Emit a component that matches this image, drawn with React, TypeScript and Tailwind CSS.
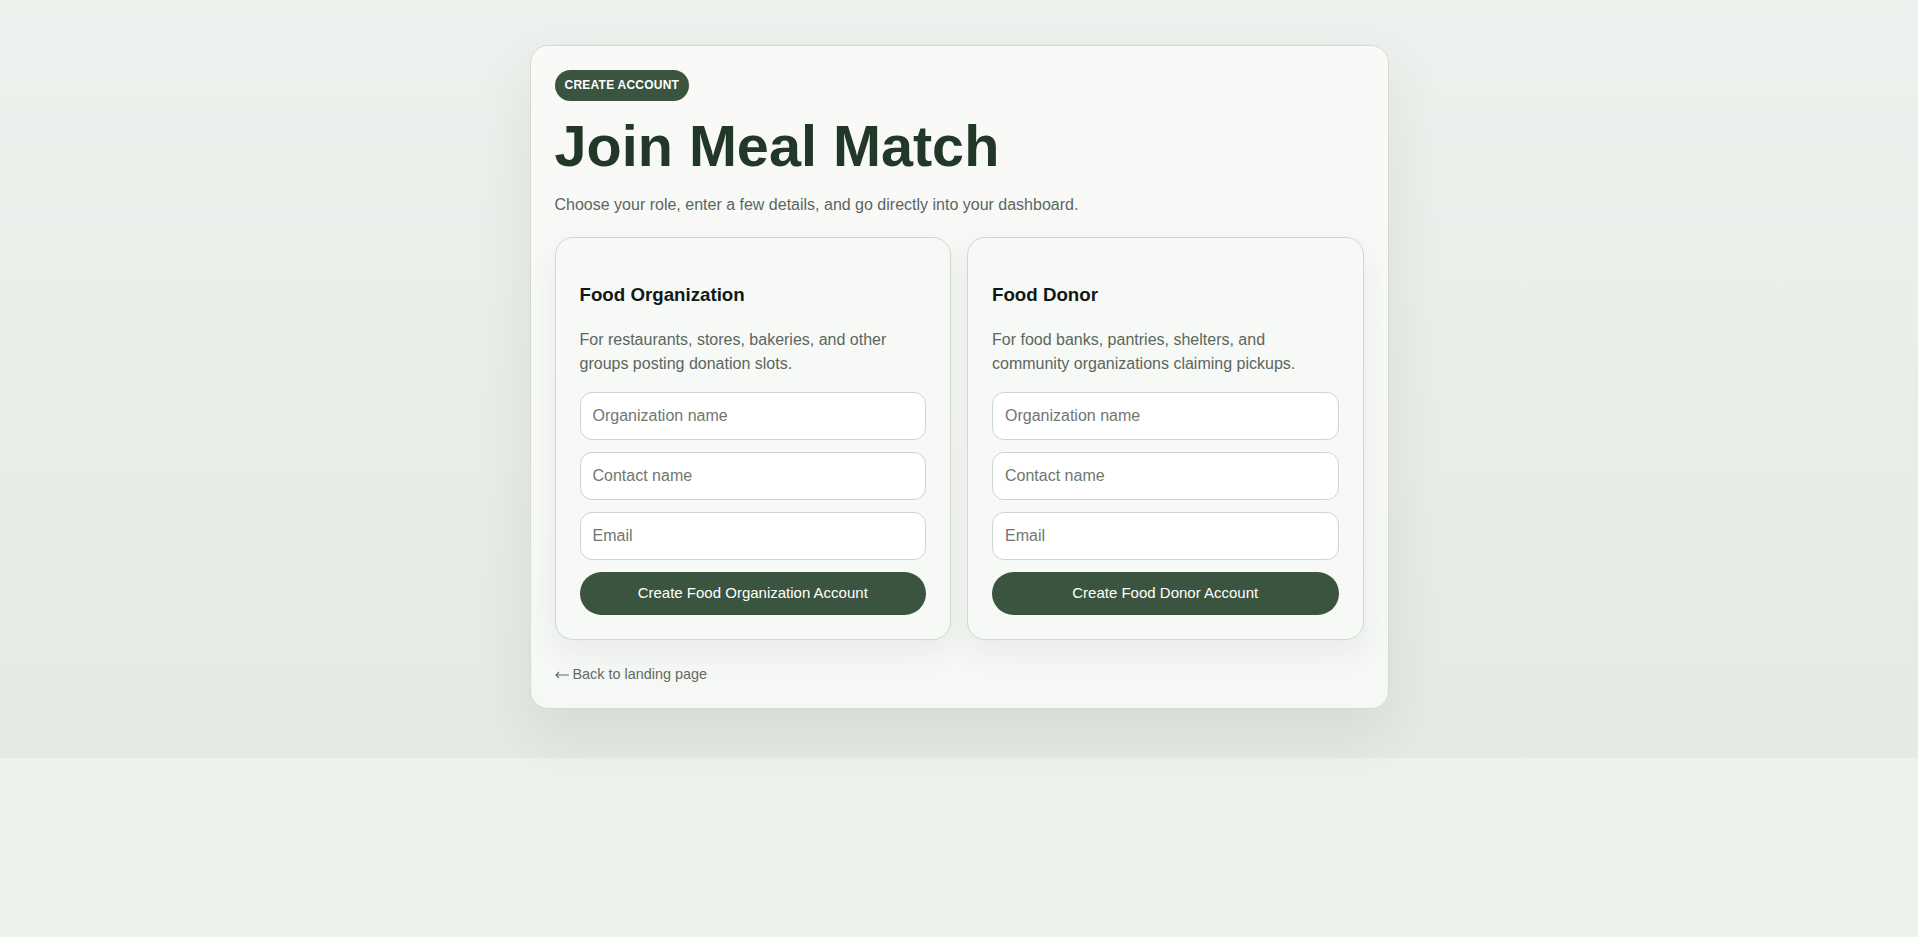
import React from "react";

function RoleCard({ title, desc, cta }: { title: string; desc: string; cta: string }) {
  return (
    <div className="rounded-[18px] border border-[#cfd7d0] bg-[#f7f9f6] px-6 pb-6 pt-[43px] shadow-[0_12px_30px_rgba(40,60,45,0.07)]">
      <h3 className="text-[18.72px] font-bold leading-[28px] text-[#111813]">{title}</h3>
      <p className="mt-[19px] text-[16px] leading-6 text-[#5b6660]">{desc}</p>
      <div className="mt-4 flex flex-col gap-3">
        <input
          className="h-12 w-full rounded-[12px] border border-[#cdd5ce] bg-white px-3 text-[16px] text-[#222] placeholder:text-[#70776f] outline-none"
          placeholder="Organization name"
        />
        <input
          className="h-12 w-full rounded-[12px] border border-[#cdd5ce] bg-white px-3 text-[16px] text-[#222] placeholder:text-[#70776f] outline-none"
          placeholder="Contact name"
        />
        <input
          className="h-12 w-full rounded-[12px] border border-[#cdd5ce] bg-white px-3 text-[16px] text-[#222] placeholder:text-[#70776f] outline-none"
          placeholder="Email"
        />
        <button className="h-[43px] w-full rounded-full bg-[#3b5440] text-[15px] text-white">{cta}</button>
      </div>
    </div>
  );
}

export default function App() {
  return (
    <div className="min-h-screen bg-[#edf2ed] font-['Liberation_Sans',Arial,sans-serif]">
      <div className="bg-gradient-to-b from-[#eef2ee] to-[#e4eae4] pb-[49px] pt-[45px]">
        <div className="mx-auto w-[859px] rounded-[18px] border border-[#d2dad3] bg-gradient-to-b from-[#f9faf8] to-[#f6f8f5] p-6 shadow-[0_24px_60px_rgba(40,60,45,0.09)]">
          <span className="inline-block rounded-full bg-[#3b5440] px-2.5 py-[7px] text-[12px] font-bold leading-[17px] tracking-[0.02em] text-white">
            CREATE ACCOUNT
          </span>
          <h1 className="mt-[17px] text-[57.6px] font-bold leading-none text-[#213828]">Join Meal Match</h1>
          <p className="mt-[17px] text-[16px] leading-6 text-[#5b6660]">
            Choose your role, enter a few details, and go directly into your dashboard.
          </p>
          <div className="mt-5 grid grid-cols-2 gap-4">
            <RoleCard
              title="Food Organization"
              desc="For restaurants, stores, bakeries, and other groups posting donation slots."
              cta="Create Food Organization Account"
            />
            <RoleCard
              title="Food Donor"
              desc="For food banks, pantries, shelters, and community organizations claiming pickups."
              cta="Create Food Donor Account"
            />
          </div>
          <a href="#" className="mt-6 flex items-center gap-1 text-[14.4px] leading-5 text-[#5f6a64]">
            <svg width="14" height="8" viewBox="0 0 14 8" fill="none" stroke="#5f6a64" strokeWidth="1.1" className="mt-[2px]">
              <path d="M14 4H1M4 1L1 4l3 3" />
            </svg>
            <span>Back to landing page</span>
          </a>
        </div>
      </div>
    </div>
  );
}
